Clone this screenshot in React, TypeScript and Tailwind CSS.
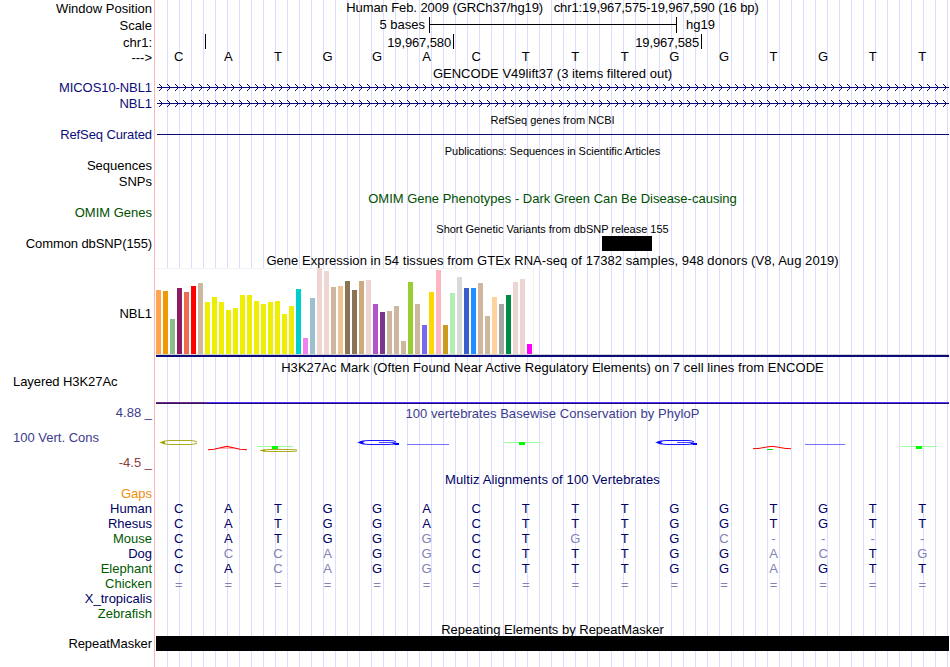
import React from 'react'
import clsx from 'clsx'

type Label = {
  text: string
  className: string
}

type Bar = {
  color: string
  height: number
}

// Left hand track labels, each row is as tall as the track it names
const labels: Label[] = [
  { text: 'Window Position', className: 'h-[17px]' },
  { text: 'Scale', className: 'h-[17px]' },
  { text: 'chr1:', className: 'h-[15px]' },
  { text: '--->', className: 'h-[30px]' },
  { text: 'MICOS10-NBL1', className: 'h-[16px] tracking-[-0.08px] text-[#0c0c78]' },
  { text: 'NBL1', className: 'h-[31px] text-[#0c0c78]' },
  { text: 'RefSeq Curated', className: 'h-[31px] tracking-[-0.1px] text-[#0c0c78]' },
  { text: 'Sequences', className: 'h-[16px]' },
  { text: 'SNPs', className: 'h-[31px]' },
  { text: 'OMIM Genes', className: 'h-[31px] text-[#005000]' },
  { text: 'Common dbSNP(155)', className: 'h-[70px] tracking-[-0.1px]' },
  { text: 'NBL1', className: 'h-[68px]' },
  { text: 'Layered H3K27Ac', className: 'h-[31px] pl-[13px] text-left tracking-[-0.07px]' },
  { text: '4.88 _', className: 'h-[25px] text-[#3c3c8c]' },
  { text: '100 Vert. Cons', className: 'h-[25px] pl-[13px] text-left text-[#3c3c8c]' },
  { text: '-4.5 _', className: 'h-[31px] text-[#8c3c3c]' },
  { text: 'Gaps', className: 'h-[15px] text-[#f08c0a]' },
  { text: 'Human', className: 'h-[15px] text-[#000064]' },
  { text: 'Rhesus', className: 'h-[15px] text-[#000064]' },
  { text: 'Mouse', className: 'h-[15px] text-[#005a00]' },
  { text: 'Dog', className: 'h-[15px] text-[#000064]' },
  { text: 'Elephant', className: 'h-[15px] text-[#005a00]' },
  { text: 'Chicken', className: 'h-[15px] text-[#005a00]' },
  { text: 'X_tropicalis', className: 'h-[15px] text-[#000064]' },
  { text: 'Zebrafish', className: 'h-[30px] text-[#005a00]' },
  { text: 'RepeatMasker', className: 'h-[15px] tracking-[-0.08px]' }
]

const reference = 'CATGGACTTTGGTGTT'

const alignments = [
  'CATGGACTTTGGTGTT',
  'CATGGACTTTGGTGTT',
  'CATGGGCTGTGC----',
  'CCCAGGCTTTGGACTG',
  'CACAGGCTTTGGAGTT',
  '================'
]

const bars: Bar[] = [
  { color: '#ffa54f', height: 64 },
  { color: '#ee9a00', height: 63 },
  { color: '#8fbc8f', height: 35 },
  { color: '#8b1c62', height: 66 },
  { color: '#ee6a50', height: 62 },
  { color: '#ff0000', height: 68 },
  { color: '#cdb79e', height: 71 },
  { color: '#eeee00', height: 52 },
  { color: '#eeee00', height: 57 },
  { color: '#eeee00', height: 52 },
  { color: '#eeee00', height: 44 },
  { color: '#eeee00', height: 46 },
  { color: '#eeee00', height: 59 },
  { color: '#eeee00', height: 59 },
  { color: '#eeee00', height: 53 },
  { color: '#eeee00', height: 50 },
  { color: '#eeee00', height: 52 },
  { color: '#eeee00', height: 53 },
  { color: '#eeee00', height: 40 },
  { color: '#eeee00', height: 48 },
  { color: '#00cdcd', height: 65 },
  { color: '#ee82ee', height: 16 },
  { color: '#9ac0cd', height: 56 },
  { color: '#eed5d2', height: 86 },
  { color: '#eed5d2', height: 83 },
  { color: '#cdb79e', height: 67 },
  { color: '#eec591', height: 68 },
  { color: '#8b7355', height: 73 },
  { color: '#8b7355', height: 64 },
  { color: '#cdaa7d', height: 73 },
  { color: '#eed5d2', height: 74 },
  { color: '#b452cd', height: 50 },
  { color: '#7a378b', height: 42 },
  { color: '#cdb79e', height: 43 },
  { color: '#cdb79e', height: 48 },
  { color: '#cdb79e', height: 13 },
  { color: '#9acd32', height: 72 },
  { color: '#cdb79e', height: 50 },
  { color: '#7a67ee', height: 29 },
  { color: '#ffd700', height: 62 },
  { color: '#ffb6c1', height: 84 },
  { color: '#cd9b1d', height: 29 },
  { color: '#b4eeb4', height: 61 },
  { color: '#d9d9d9', height: 77 },
  { color: '#3a5fcd', height: 66 },
  { color: '#1e90ff', height: 66 },
  { color: '#cdb79e', height: 71 },
  { color: '#cdb79e', height: 38 },
  { color: '#ffd39b', height: 57 },
  { color: '#a6a6a6', height: 50 },
  { color: '#008b45', height: 59 },
  { color: '#eed5d2', height: 72 },
  { color: '#eed5d2', height: 75 },
  { color: '#ff00ff', height: 10 }
]

function Title({ children, className }: { children: React.ReactNode; className?: string }) {
  return <div className={clsx('text-center whitespace-pre', className)}>{children}</div>
}

function Bases({ sequence, compare }: { sequence: string; compare?: string }) {
  return (
    <div className={clsx('-ml-[2px] grid h-[15px] w-[793px] grid-cols-16 text-center', sequence[0] === '=' && 'pt-px')}>
      {sequence.split('').map((base, index) => (
        <span
          key={index}
          className={clsx(compare && (base === compare[index] ? 'text-[#000064]' : 'text-[#8282b4]'))}
        >
          {base}
        </span>
      ))}
    </div>
  )
}

function GeneLine() {
  const tips = Array.from({ length: 99 }, (_, i) => 6 + i * 8)

  return (
    <svg width="793" height="7" viewBox="0 0 793 7" className="block" shapeRendering="crispEdges">
      <rect x="1" y="3" width="792" height="1" fill="#0c0c78" />
      {tips.map(x => (
        <path
          key={x}
          d={`M${x - 3} 0h1v1h-1zM${x - 2} 1h1v1h-1zM${x - 1} 2h1v1h-1zM${x} 3h1v1h-1zM${x - 1} 4h1v1h-1zM${x - 2} 5h1v1h-1zM${x - 3} 6h1v1h-1z`}
          fill="#0c0c78"
        />
      ))}
    </svg>
  )
}

function LogoC({ x, y, h }: { x: number; y: number; h: number }) {
  return (
    <g transform={`translate(${x} ${y})`} fill="none" stroke="#a0a000">
      <path
        d={`M38 ${h * 0.35}Q35 .5 30 .5H11Q4 .7 2 ${h / 2}Q4 ${h - 0.6} 11 ${h - 0.5}H30Q35 ${h - 0.5} 38 ${h * 0.65}`}
        strokeWidth="0.9"
      />
      <path d={`M0 ${h / 2}L6 ${h * 0.2}V${h * 0.8}Z`} fill="#a0a000" stroke="none" />
    </g>
  )
}

function LogoG({ x }: { x: number }) {
  return (
    <g transform={`translate(${x} 0)`} fill="none" stroke="#0000ff">
      <path d="M39 5.8Q37 4.5 32 4.5H12Q3 4.8 2 6.5Q4 8.4 12 8.5H31Q37 8.4 39 7.3" strokeWidth="0.9" />
      <path d="M22 6.5H37L41 7.6" strokeWidth="0.7" />
      <path d="M0 6.5L5 5.2H8L6 6.5L8 7.8H5ZM35 7H42V9H38Z" fill="#0000ff" stroke="none" />
    </g>
  )
}

function LogoT({ x, y }: { x: number; y: number }) {
  return (
    <g transform={`translate(${x} ${y})`}>
      <rect width="36" height="1" fill="#9cff9c" />
      <rect x="15" width="6" height="3" fill="#00ff00" />
    </g>
  )
}

function Conservation() {
  return (
    <svg width="793" height="20" viewBox="0 0 793 20" className="block">
      <LogoC x={3} y={4} h={5} />
      <path d="M52 13.7L58 13.2L71 10.4L84 13.2L91 13.7" fill="none" stroke="#ff0000" strokeWidth="1.1" />
      <path d="M64 12.5H78" stroke="#ff9090" strokeWidth="0.7" />
      <LogoC x={103} y={13} h={3} />
      <LogoT x={101} y={10} />
      <LogoG x={201} />
      <path d="M251 8.5H293" stroke="#6464ff" strokeWidth="0.9" />
      <LogoT x={348} y={6} />
      <LogoG x={499} />
      <path d="M597 12.7L603 12.4L612 10.8L616 10.4L620 10.8L629 12.4L635 12.7" fill="none" stroke="#ff0000" strokeWidth="1" />
      <rect x="611" y="13" width="6" height="1" fill="#00e000" />
      <path d="M649 8.5H689" stroke="#6464ff" strokeWidth="0.9" />
      <LogoT x={745} y={10} />
    </svg>
  )
}

export default function App() {
  return (
    <div className="flex h-[667px] w-[950px] overflow-hidden bg-white font-['Liberation_Sans',Arial,sans-serif] text-[13px] leading-[15px] text-black">
      {/* Labels */}
      <div className="w-[154px] shrink-0 pt-px pr-[2px] text-right whitespace-nowrap">
        {labels.map((label, index) => (
          <div key={index} className={label.className}>
            {label.text}
          </div>
        ))}
      </div>
      <div className="mr-px w-px shrink-0 bg-[#ffb4b4]" />

      {/* Tracks */}
      <div className="w-[793px] shrink-0 bg-[repeating-linear-gradient(to_right,transparent_0px,transparent_11px,#dcdcff_11px,#dcdcff_12px)]">
        <Title className="h-[17px] tracking-[-0.09px]">
          Human Feb. 2009 (GRCh37/hg19)   chr1:19,967,575-19,967,590 (16 bp)
        </Title>

        <div className="flex h-[17px]">
          <div className="w-[269px] text-right">5 bases</div>
          <div className="ml-1 h-[16px] w-[248px] border-x border-black pt-[7px]">
            <div className="h-px bg-black" />
          </div>
          <div className="ml-[9px]">hg19</div>
        </div>

        <div className="flex h-[15px] tracking-[-0.13px]">
          <div className="w-[50px] border-r border-black" />
          <div className="w-[248px] border-r border-black pt-px pr-[2px] text-right">19,967,580</div>
          <div className="w-[248px] border-r border-black pt-px pr-[2px] text-right">19,967,585</div>
        </div>

        <Bases sequence={reference} />

        <Title className="mt-[2px] tracking-[0.02px]">GENCODE V49lift37 (3 items filtered out)</Title>
        <div className="flex h-[31px] flex-col gap-[9px] pt-[3px]">
          <GeneLine />
          <GeneLine />
        </div>

        <Title className="h-[22px] pt-[2px] text-[11px] leading-[12px]">RefSeq genes from NCBI</Title>
        <div className="ml-px h-px bg-[#0c0c78]" />

        <Title className="h-[56px] pt-[10px] text-[11px] leading-[12px] tracking-[-0.05px]">
          Publications: Sequences in Scientific Articles
        </Title>

        <Title className="h-[32px] text-[#005000]">
          OMIM Gene Phenotypes - Dark Green Can Be Disease-causing
        </Title>

        <Title className="h-[13px] text-[11px] leading-[12px] tracking-[-0.02px]">
          Short Genetic Variants from dbSNP release 155
        </Title>
        <div className="ml-[446px] h-[15px] w-[50px] bg-black" />

        <Title className="mt-[2px] tracking-[0.055px]">
          Gene Expression in 54 tissues from GTEx RNA-seq of 17382 samples, 948 donors (V8, Aug 2019)
        </Title>
        <div className="flex h-[86px] w-[378px] items-end gap-[2px] bg-white shadow-[inset_-1px_1px_0_#f2f2f2]">
          {bars.map((bar, index) => (
            <div key={index} className="w-[5px] shrink-0" style={{ height: bar.height, backgroundColor: bar.color }} />
          ))}
        </div>
        <div className="h-[3px] border-t border-[#d2d2d2] bg-[#0c0c78]" />

        <Title className="h-[45px] pt-[3px] tracking-[0.06px]">
          H3K27Ac Mark (Often Found Near Active Regulatory Elements) on 7 cell lines from ENCODE
        </Title>
        <div className="flex h-[2px]">
          <div className="w-[50px] border-t border-[#6e2896] bg-[#321450]" />
          <div className="flex-1 border-t border-[#5a32ff] bg-[#1e0a78]" />
        </div>

        <Title className="h-[32px] pt-[2px] tracking-[0.04px] text-[#3c3c8c]">
          100 vertebrates Basewise Conservation by PhyloP
        </Title>
        <Conservation />

        <Title className="mt-[16px] h-[29px] tracking-[0.11px] text-[#000064]">
          Multiz Alignments of 100 Vertebrates
        </Title>
        {alignments.map((sequence, index) => (
          <Bases key={index} sequence={sequence} compare={reference} />
        ))}

        <Title className="mt-[31px] h-[14px]">Repeating Elements by RepeatMasker</Title>
        <div className="h-[15px] bg-black" />
      </div>
    </div>
  )
}
